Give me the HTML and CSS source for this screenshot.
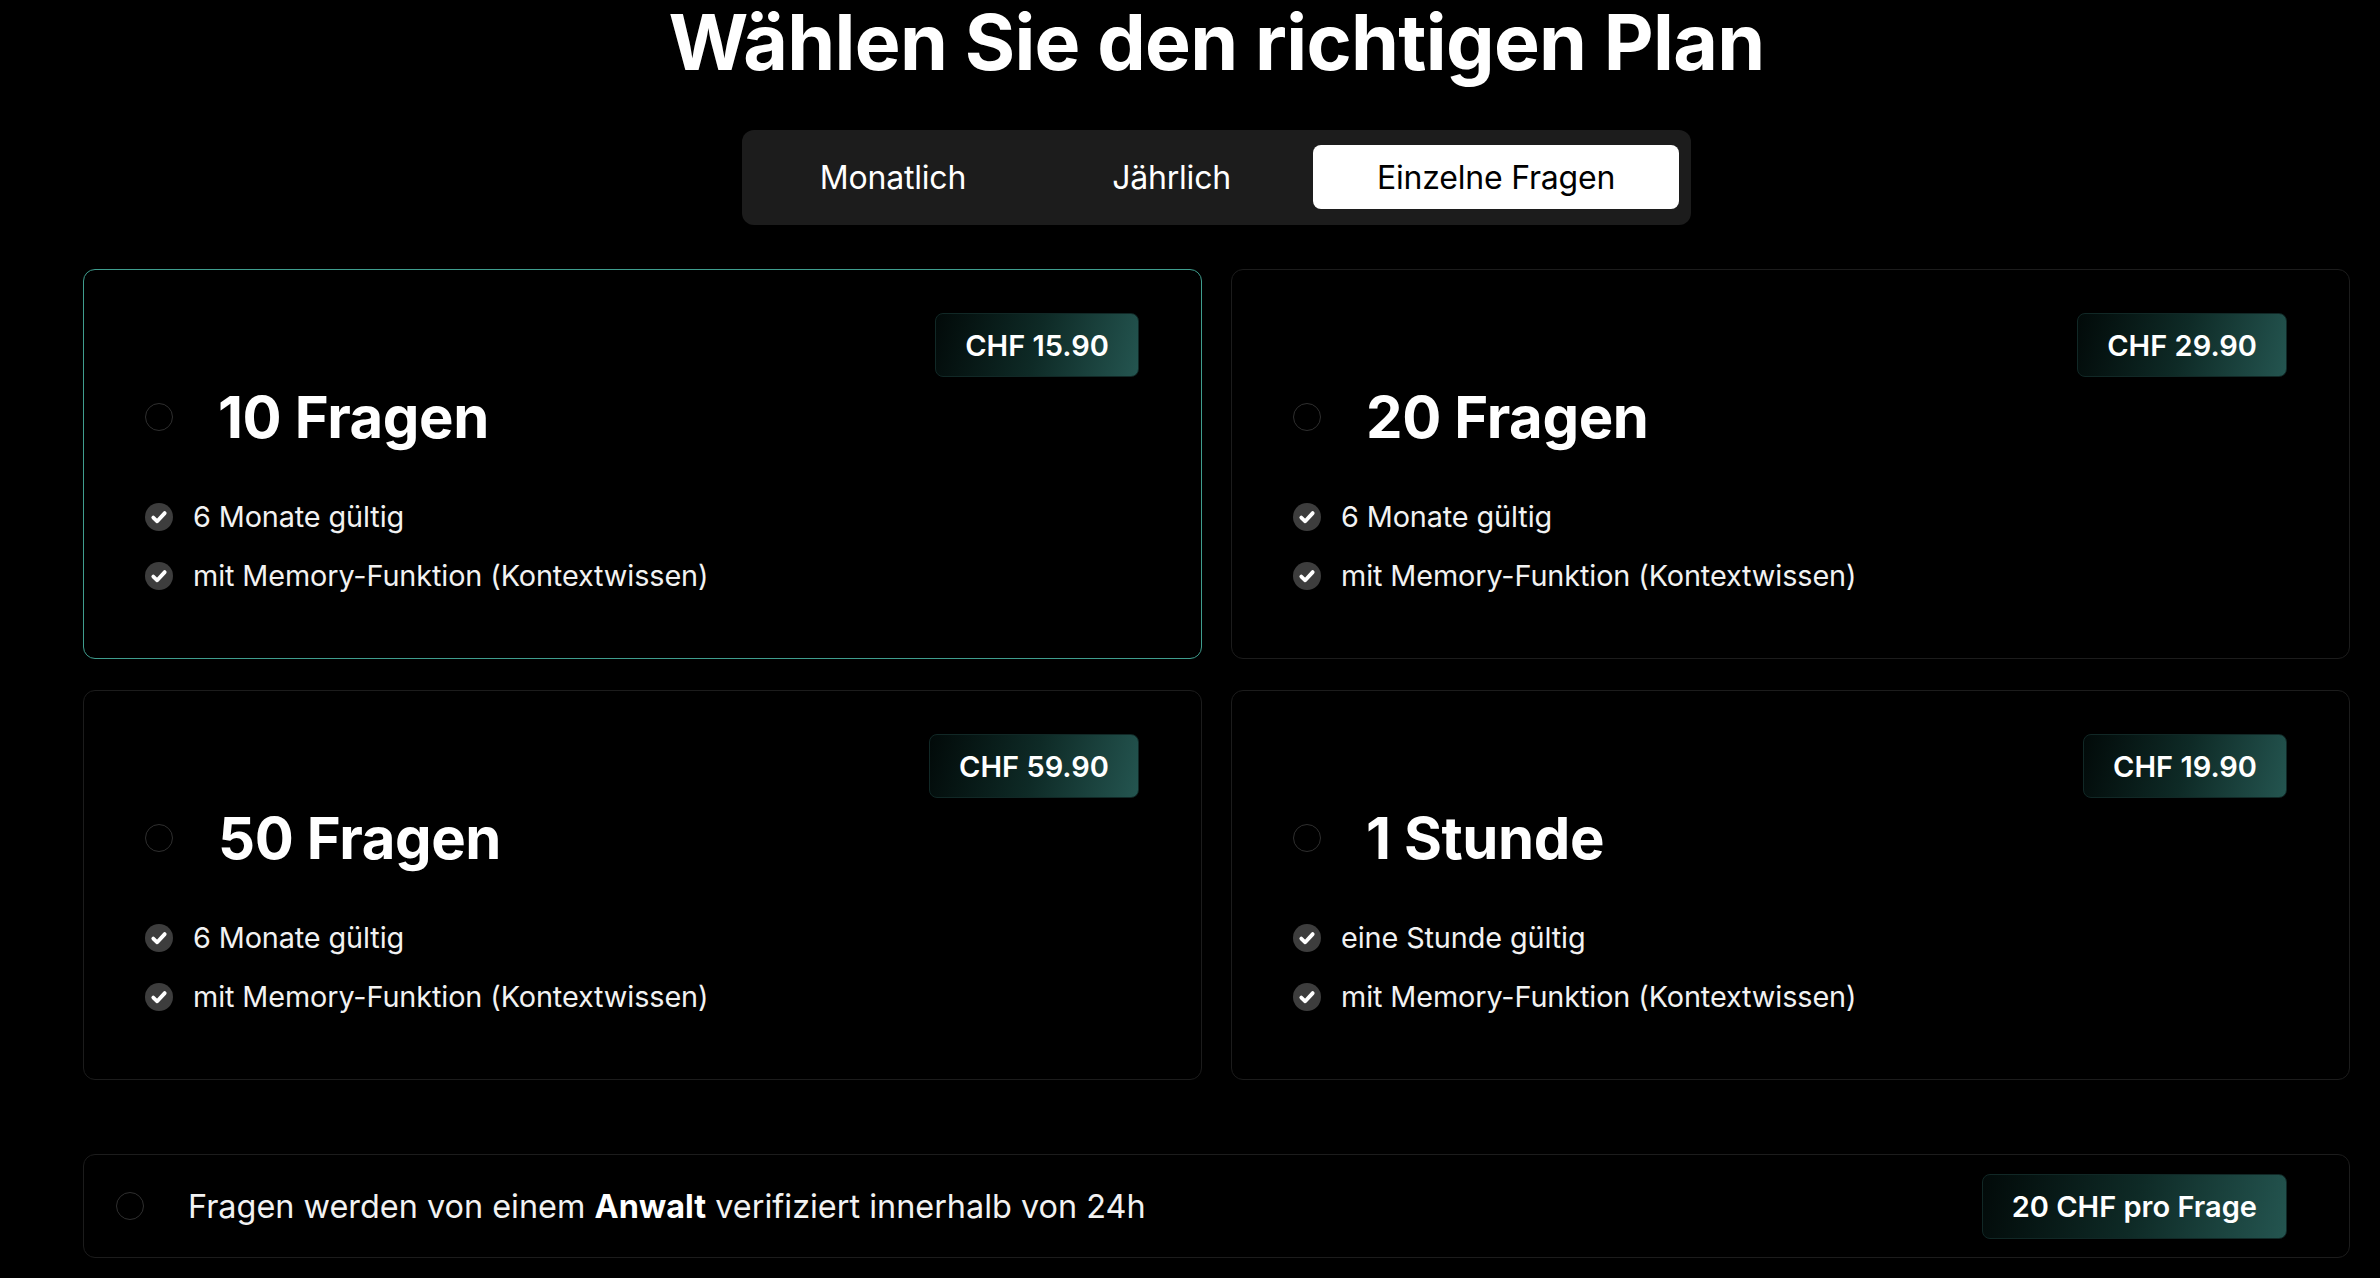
FILE: index.html
```html
<!DOCTYPE html>
<html lang="de">

<head>
    <meta charset="UTF-8">
    <meta name="viewport" content="width=device-width, initial-scale=1.0">
    <title>Pläne</title>
    <link rel="stylesheet" href="styles.css">
</head>

<body>
    <div class="page">
        <h1 class="title">Wählen Sie den richtigen Plan</h1>

        <div class="tabs-wrap">
            <div class="tabs">
                <button class="tab">Monatlich</button>
                <button class="tab">Jährlich</button>
                <button class="tab active">Einzelne Fragen</button>
            </div>
        </div>

        <div class="plans">
            <div class="plan selected">
                <div class="price">CHF 15.90</div>
                <div class="plan-head">
                    <span class="radio"></span>
                    <h2>10 Fragen</h2>
                </div>
                <ul class="features">
                    <li><svg class="check" viewBox="0 0 28 28"><circle cx="14" cy="14" r="14" /><path d="M8.3 14.6l3.9 3.7 7.5-8.2" /></svg>6 Monate gültig</li>
                    <li><svg class="check" viewBox="0 0 28 28"><circle cx="14" cy="14" r="14" /><path d="M8.3 14.6l3.9 3.7 7.5-8.2" /></svg>mit Memory-Funktion (Kontextwissen)</li>
                </ul>
            </div>

            <div class="plan">
                <div class="price">CHF 29.90</div>
                <div class="plan-head">
                    <span class="radio"></span>
                    <h2>20 Fragen</h2>
                </div>
                <ul class="features">
                    <li><svg class="check" viewBox="0 0 28 28"><circle cx="14" cy="14" r="14" /><path d="M8.3 14.6l3.9 3.7 7.5-8.2" /></svg>6 Monate gültig</li>
                    <li><svg class="check" viewBox="0 0 28 28"><circle cx="14" cy="14" r="14" /><path d="M8.3 14.6l3.9 3.7 7.5-8.2" /></svg>mit Memory-Funktion (Kontextwissen)</li>
                </ul>
            </div>

            <div class="plan">
                <div class="price">CHF 59.90</div>
                <div class="plan-head">
                    <span class="radio"></span>
                    <h2>50 Fragen</h2>
                </div>
                <ul class="features">
                    <li><svg class="check" viewBox="0 0 28 28"><circle cx="14" cy="14" r="14" /><path d="M8.3 14.6l3.9 3.7 7.5-8.2" /></svg>6 Monate gültig</li>
                    <li><svg class="check" viewBox="0 0 28 28"><circle cx="14" cy="14" r="14" /><path d="M8.3 14.6l3.9 3.7 7.5-8.2" /></svg>mit Memory-Funktion (Kontextwissen)</li>
                </ul>
            </div>

            <div class="plan">
                <div class="price">CHF 19.90</div>
                <div class="plan-head">
                    <span class="radio"></span>
                    <h2>1 Stunde</h2>
                </div>
                <ul class="features">
                    <li><svg class="check" viewBox="0 0 28 28"><circle cx="14" cy="14" r="14" /><path d="M8.3 14.6l3.9 3.7 7.5-8.2" /></svg>eine Stunde gültig</li>
                    <li><svg class="check" viewBox="0 0 28 28"><circle cx="14" cy="14" r="14" /><path d="M8.3 14.6l3.9 3.7 7.5-8.2" /></svg>mit Memory-Funktion (Kontextwissen)</li>
                </ul>
            </div>
        </div>

        <div class="addon">
            <span class="radio"></span>
            <p>Fragen werden von einem <b>Anwalt</b> verifiziert innerhalb von 24h</p>
            <div class="price">20 CHF pro Frage</div>
        </div>
    </div>
</body>

</html>
```

FILE: styles.css
```css
* {
    box-sizing: border-box;
}

body {
    margin: 0;
    background-color: #000;
    color: #fff;
    font-family: Inter, "Noto Sans", sans-serif;
}

.page {
    padding: 4px 30px 0 83px;
}

.title {
    margin: 0;
    font-size: 77px;
    line-height: 77px;
    font-weight: 700;
    text-align: center;
    letter-spacing: -0.7px;
}

.tabs-wrap {
    display: flex;
    justify-content: center;
    margin-top: 49px;
}

.tabs {
    display: flex;
    gap: 18px;
    padding: 15px 12px 16px 14px;
    background-color: #1c1c1c;
    border-radius: 12px;
}

.tab {
    height: 64px;
    padding: 0 64px;
    border: none;
    border-radius: 8px;
    background: transparent;
    color: #fff;
    font-family: inherit;
    font-size: 32px;
    letter-spacing: -0.2px;
}

.tab.active {
    background-color: #fff;
    color: #000;
}

.plans {
    display: grid;
    grid-template-columns: 1fr 1fr;
    column-gap: 29px;
    row-gap: 31px;
    margin-top: 44px;
}

.plan {
    display: flex;
    flex-direction: column;
    height: 390px;
    padding: 43px 62px 0 61px;
    border: 1px solid #1c1c1c;
    border-radius: 12px;
}

.plan.selected {
    border-color: #3f9d8e;
}

.price {
    align-self: flex-end;
    display: flex;
    align-items: center;
    height: 64px;
    padding: 0 29px;
    border: 1px solid #112826;
    border-radius: 8px;
    background: linear-gradient(105deg, #020a09 0%, #0e2a26 50%, #245550 100%);
    font-size: 29px;
    font-weight: 600;
    white-space: nowrap;
}

.plan-head {
    display: flex;
    align-items: center;
    gap: 45px;
    margin-top: 5px;
}

.plan-head h2 {
    margin: 0;
    font-size: 58px;
    line-height: 70px;
    font-weight: 700;
    letter-spacing: -0.4px;
}

.radio {
    flex: none;
    width: 28px;
    height: 28px;
    border: 1.5px solid #2f2f2f;
    border-radius: 50%;
}

.features {
    display: flex;
    flex-direction: column;
    gap: 16px;
    margin: 43px 0 0;
    padding: 0;
    list-style: none;
}

.features li {
    display: flex;
    align-items: center;
    gap: 20px;
    font-size: 28.8px;
    line-height: 43px;
    color: #f2f2f2;
    letter-spacing: -0.1px;
}

.check {
    flex: none;
    width: 28px;
    height: 28px;
}

.check circle {
    fill: #3d3d3d;
}

.check path {
    fill: none;
    stroke: #fff;
    stroke-width: 3.8;
    stroke-linecap: round;
    stroke-linejoin: round;
}

.addon {
    display: flex;
    align-items: center;
    height: 104px;
    margin-top: 74px;
    padding: 0 62px 0 32px;
    border: 1px solid #1c1c1c;
    border-radius: 12px;
}

.addon p {
    flex: 1;
    margin: 0 0 0 44px;
    font-size: 32.4px;
    color: #f2f2f2;
}

.addon p b {
    font-weight: 700;
    color: #fff;
}

.addon .price {
    align-self: center;
    height: 65px;
    font-size: 29px;
}
```
